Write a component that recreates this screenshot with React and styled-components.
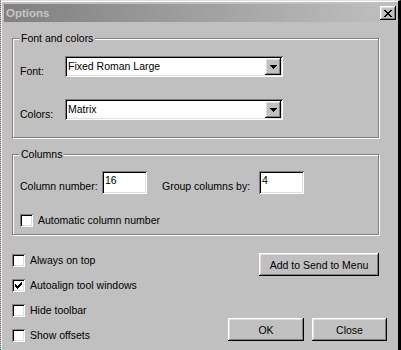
import React from 'react';
import styled, { createGlobalStyle } from 'styled-components';

const GlobalStyle = createGlobalStyle`
  body {
    margin: 0;
    background: #c0c0c0;
    font-family: "Liberation Sans", Arial, sans-serif;
    font-size: 10.5px;
    color: #000;
  }
`;

const raised = `
  box-shadow: inset -1px -1px #000, inset 1px 1px #fff,
    inset -2px -2px #808080, inset 2px 2px #dfdfdf;
`;

const sunken = `
  box-shadow: inset 1px 1px #808080, inset -1px -1px #fff,
    inset 2px 2px #000, inset -2px -2px #dfdfdf;
`;

const Window = styled.div`
  box-sizing: border-box;
  width: 401px;
  height: 350px;
  overflow: hidden;
  background: #c0c0c0;
  border-left: 1px dotted #17936a;
  border-top: 1px solid #dfdfdf;
  border-right: 3px solid #000;
  box-shadow: inset 1px 1px #fff;
  padding: 3px 0 0 3px;
`;

const TitleBar = styled.div`
  height: 18px;
  display: flex;
  align-items: center;
  justify-content: space-between;
  padding: 0 2px;
  background: linear-gradient(to right, #808080, #c0c0c0);
`;

const TitleText = styled.span`
  font-weight: bold;
  font-size: 11.5px;
  color: #c6c6c6;
`;

const TitleButton = styled.button`
  width: 16px;
  height: 14px;
  padding: 0;
  border: none;
  background: #c0c0c0;
  display: flex;
  align-items: center;
  justify-content: center;
  ${raised}
`;

const Body = styled.div`
  padding-left: 8px;
`;

const GroupBox = styled.div`
  box-sizing: border-box;
  width: 367px;
  margin-top: ${(p) => p.$top}px;
  border: 1px solid #808080;
  box-shadow: inset 1px 1px #fff, 1px 1px #fff;
  padding: 0 0 ${(p) => p.$bottom}px 7px;
`;

const GroupTitle = styled.div`
  width: fit-content;
  margin: -7px 0 0 -1px;
  padding: 0 2px;
  line-height: 13px;
  background: #c0c0c0;
`;

const Row = styled.div`
  display: flex;
  align-items: flex-start;
  margin-top: ${(p) => p.$top}px;
`;

const Label = styled.span`
  width: ${(p) => p.$width}px;
  margin-left: ${(p) => p.$left || 0}px;
  padding-top: 9px;
  line-height: 13px;
  white-space: nowrap;
`;

const Combo = styled.div`
  box-sizing: border-box;
  width: 218px;
  height: 21px;
  padding: 2px;
  display: flex;
  background: #fff;
  ${sunken}
`;

const ComboText = styled.span`
  flex: 1;
  padding-left: 1px;
  line-height: 17px;
`;

const ComboButton = styled.div`
  width: 16px;
  height: 17px;
  background: #c0c0c0;
  display: flex;
  align-items: center;
  justify-content: center;
  ${raised}
`;

const TextField = styled.div`
  box-sizing: border-box;
  width: 45px;
  height: 23px;
  padding: 3px 0 0 3px;
  line-height: 13px;
  background: #fff;
  ${sunken}
`;

const CheckRow = styled.div`
  display: flex;
  align-items: center;
  gap: 5px;
  margin-top: ${(p) => p.$top || 0}px;
  line-height: 13px;
`;

const CheckBox = styled.span`
  box-sizing: border-box;
  width: 13px;
  height: 13px;
  padding: 3px;
  display: flex;
  background: #fff;
  ${sunken}
`;

const BottomArea = styled.div`
  width: 375px;
  margin-top: 18px;
  display: flex;
  justify-content: space-between;
`;

const CheckColumn = styled.div`
  display: flex;
  flex-direction: column;
  gap: 12px;
  padding-top: 1px;
`;

const ButtonColumn = styled.div`
  display: flex;
  flex-direction: column;
  align-items: flex-end;
`;

const ButtonRow = styled.div`
  display: flex;
  gap: 8px;
  margin-top: 42px;
`;

const PushButton = styled.button`
  width: ${(p) => p.$width}px;
  height: 23px;
  margin-right: ${(p) => p.$right || 0}px;
  padding: 0;
  border: none;
  background: #c0c0c0;
  font: inherit;
  color: #000;
  ${raised}
`;

const CloseGlyph = () => (
  <svg width="8" height="7" viewBox="0 0 8 7" shapeRendering="crispEdges">
    <path
      d="M0 0h2v1H0zM6 0h2v1H6zM1 1h2v1H1zM5 1h2v1H5zM2 2h4v1H2zM3 3h2v1H3zM2 4h4v1H2zM1 5h2v1H1zM5 5h2v1H5zM0 6h2v1H0zM6 6h2v1H6z"
      fill="#000"
    />
  </svg>
);

const ArrowGlyph = () => (
  <svg width="7" height="4" viewBox="0 0 7 4" shapeRendering="crispEdges">
    <path d="M0 0h7v1H0zM1 1h5v1H1zM2 2h3v1H2zM3 3h1v1H3z" fill="#000" />
  </svg>
);

const CheckGlyph = () => (
  <svg width="7" height="7" viewBox="0 0 7 7" shapeRendering="crispEdges">
    <path
      d="M6 0h1v1H6zM5 1h2v1H5zM0 2h1v1H0zM4 2h3v1H4zM0 3h2v1H0zM3 3h3v1H3zM0 4h5v1H0zM1 5h3v1H1zM2 6h1v1H2z"
      fill="#000"
    />
  </svg>
);

const Check = ({ label, checked, top }) => (
  <CheckRow $top={top}>
    <CheckBox>{checked ? <CheckGlyph /> : null}</CheckBox>
    <span>{label}</span>
  </CheckRow>
);

const DropDown = ({ value }) => (
  <Combo>
    <ComboText>{value}</ComboText>
    <ComboButton>
      <ArrowGlyph />
    </ComboButton>
  </Combo>
);

const App = () => (
  <>
    <GlobalStyle />
    <Window>
      <TitleBar>
        <TitleText>Options</TitleText>
        <TitleButton type="button">
          <CloseGlyph />
        </TitleButton>
      </TitleBar>
      <Body>
        <GroupBox $top={16} $bottom={16}>
          <GroupTitle>Font and colors</GroupTitle>
          <Row $top={11}>
            <Label $width={45}>Font:</Label>
            <DropDown value="Fixed Roman Large" />
          </Row>
          <Row $top={21}>
            <Label $width={45}>Colors:</Label>
            <DropDown value="Matrix" />
          </Row>
        </GroupBox>
        <GroupBox $top={16} $bottom={7}>
          <GroupTitle>Columns</GroupTitle>
          <Row $top={10}>
            <Label $width={82}>Column number:</Label>
            <TextField>16</TextField>
            <Label $width={97} $left={15}>
              Group columns by:
            </Label>
            <TextField>4</TextField>
          </Row>
          <Check label="Automatic column number" top={20} />
        </GroupBox>
        <BottomArea>
          <CheckColumn>
            <Check label="Always on top" />
            <Check label="Autoalign tool windows" checked />
            <Check label="Hide toolbar" />
            <Check label="Show offsets" />
          </CheckColumn>
          <ButtonColumn>
            <PushButton type="button" $width={120} $right={8}>
              Add to Send to Menu
            </PushButton>
            <ButtonRow>
              <PushButton type="button" $width={76}>
                OK
              </PushButton>
              <PushButton type="button" $width={75}>
                Close
              </PushButton>
            </ButtonRow>
          </ButtonColumn>
        </BottomArea>
      </Body>
    </Window>
  </>
);

export default App;
